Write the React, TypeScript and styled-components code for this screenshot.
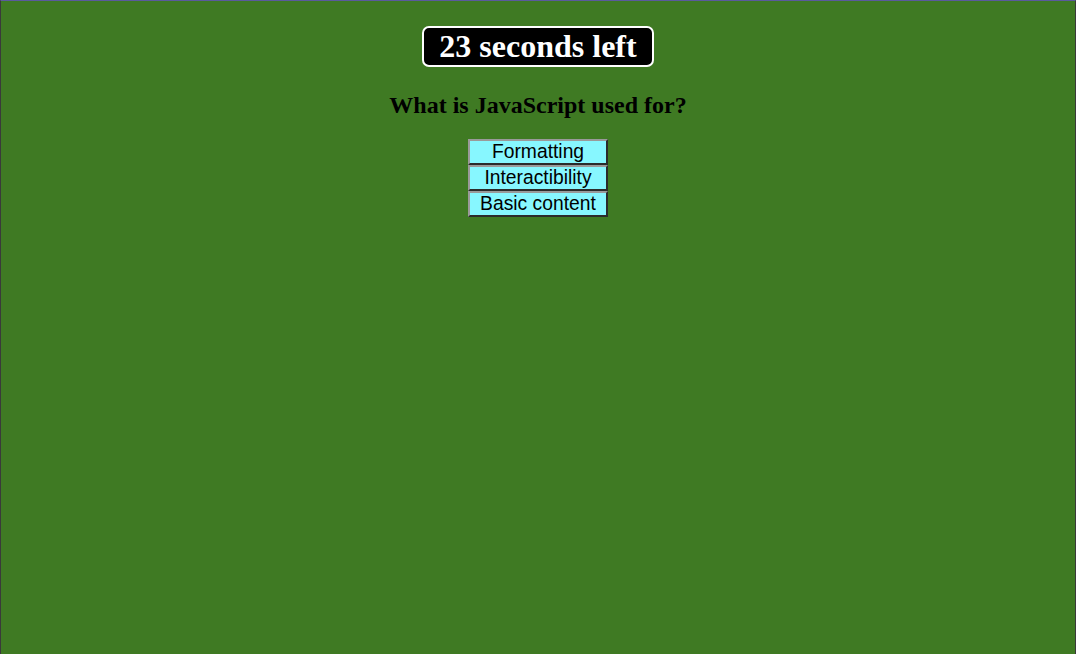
import React from "react";
import styled, { createGlobalStyle } from "styled-components";

const GlobalStyle = createGlobalStyle`
  html, body {
    margin: 0;
    padding: 0;
    height: 100%;
  }
  #root {
    height: 100%;
  }
`;

const Page = styled.div`
  box-sizing: border-box;
  height: 654px;
  background-color: #3f7a23;
  border-top: 1px solid #5a5a9e;
  border-left: 1px solid #3a3a3a;
  border-right: 1px solid #3a3a3a;
  display: flex;
  flex-direction: column;
  align-items: center;
  padding-top: 25px;
`;

const Timer = styled.div`
  background-color: #000;
  color: #fff;
  border: 2px solid #fff;
  border-radius: 7px;
  padding: 0 15px;
  font-family: "Liberation Serif", serif;
  font-weight: 700;
  font-size: 32px;
  line-height: 37px;
`;

const Question = styled.h2`
  margin: 24px 0 20px;
  font-family: "Liberation Serif", serif;
  font-weight: 700;
  font-size: 24px;
  line-height: 28px;
  color: #000;
`;

const Answers = styled.div`
  display: flex;
  flex-direction: column;
`;

const AnswerButton = styled.button`
  box-sizing: border-box;
  width: 140px;
  height: 26px;
  padding: 0;
  margin: 0;
  background-color: #87f7ff;
  border: 2px solid;
  border-color: #9a9a9a #2b2b2b #2b2b2b #9a9a9a;
  font-family: "Liberation Sans", Arial, sans-serif;
  font-size: 19.3px;
  line-height: 22px;
  color: #000;
  cursor: pointer;
`;

const answers = ["Formatting", "Interactibility", "Basic content"];

export default function App() {
  return (
    <>
      <GlobalStyle />
      <Page>
        <Timer>23 seconds left</Timer>
        <Question>What is JavaScript used for?</Question>
        <Answers>
          {answers.map((a) => (
            <AnswerButton key={a}>{a}</AnswerButton>
          ))}
        </Answers>
      </Page>
    </>
  );
}
